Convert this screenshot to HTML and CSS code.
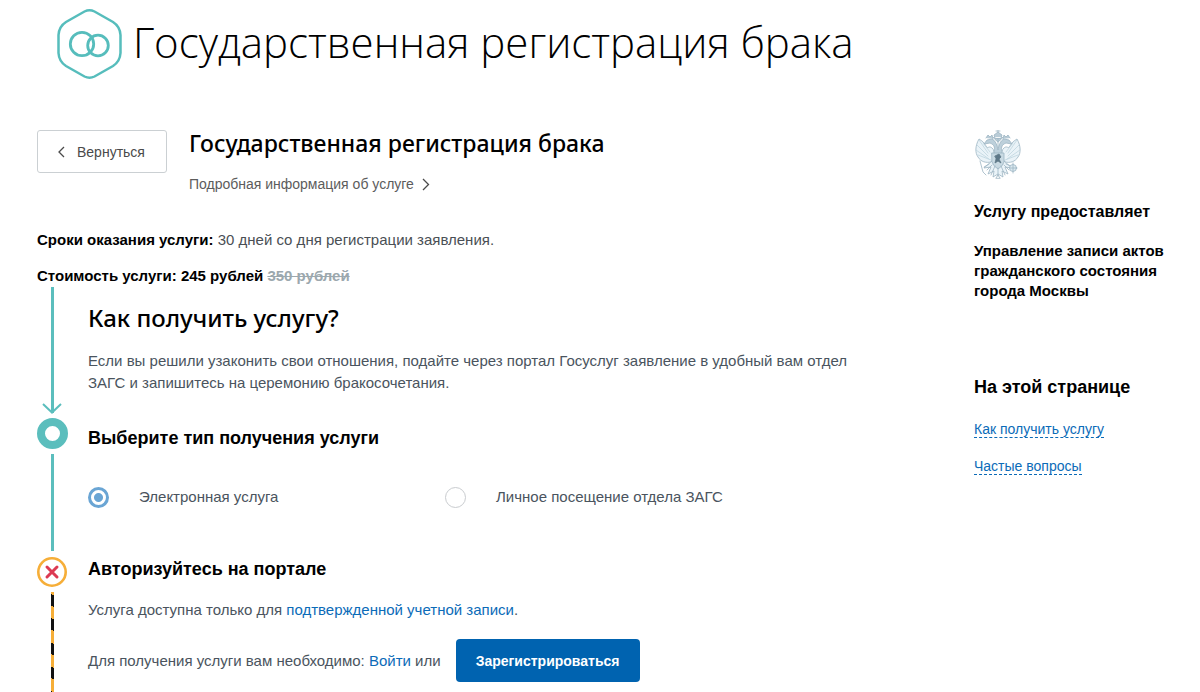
FILE: index.html
```html
<!DOCTYPE html>
<html lang="ru">
<head>
<meta charset="utf-8">
<meta name="viewport" content="width=device-width, initial-scale=1">
<title>Государственная регистрация брака</title>
<link rel="stylesheet" href="styles.css">
</head>
<body>
<div class="page">
  <header class="hero">
    <svg class="hero-icon" width="66" height="72" viewBox="0 0 66 72" fill="none" stroke="#56bdbc" aria-hidden="true">
      <path stroke-width="2.5" d="M27.500 3.500Q32.500 1 37.500 3.500L56 14Q63 18.500 63.500 27V45Q63 53.500 56 58L37.500 68.500Q32.500 71 27.500 68.500L9 58Q2 53.500 1.500 45V27Q2 18.500 9 14Z"/>
      <circle cx="25" cy="36" r="11.700" stroke-width="2.800"/>
      <circle cx="41" cy="37.500" r="10.300" stroke-width="2.800"/>
    </svg>
    <h1 class="hero-title">Государственная регистрация брака</h1>
  </header>
  <div class="columns">
    <main class="content">
      <div class="service-head">
        <button class="back" type="button">
          <svg width="7" height="12" viewBox="0 0 7 12" fill="none" stroke="#4a4a4a" stroke-width="1.300" aria-hidden="true"><path d="M6 1 1 6l5 5"/></svg>
          Вернуться
        </button>
        <div>
          <h2 class="service-title">Государственная регистрация брака</h2>
          <a class="details" href="#details">Подробная информация об услуге
            <svg width="8" height="13" viewBox="0 0 8 13" fill="none" stroke="#4a4a4a" stroke-width="1.300" aria-hidden="true"><path d="m1 1 5.500 5.500L1 12"/></svg>
          </a>
        </div>
      </div>
      <p class="fact"><b>Сроки оказания услуги:</b> 30 дней со дня регистрации заявления.</p>
      <p class="fact"><b>Стоимость услуги: 245 рублей <s class="old-price">350 рублей</s></b></p>

      <section class="step" id="how">
        <div class="rail rail-first">
          <div class="rail-line"></div>
          <svg class="rail-arrow" width="20" height="11" viewBox="0 0 20 11" fill="none" stroke="#5bbebd" stroke-width="2" aria-hidden="true"><path d="m1 1 9 8.500L19 1"/></svg>
        </div>
        <div class="step-body intro">
          <h2 class="how-title">Как получить услугу?</h2>
          <p class="text">Если вы решили узаконить свои отношения, подайте через портал Госуслуг заявление в удобный вам отдел ЗАГС и запишитесь на церемонию бракосочетания.</p>
        </div>
      </section>

      <section class="step">
        <div class="rail rail-middle">
          <div class="ring"></div>
          <div class="rail-line"></div>
        </div>
        <div class="step-body choice">
          <h3 class="step-title" id="type-title">Выберите тип получения услуги</h3>
          <div class="options" role="radiogroup" aria-labelledby="type-title">
            <label class="option"><input class="radio" type="radio" name="type" checked>Электронная услуга</label>
            <label class="option"><input class="radio" type="radio" name="type">Личное посещение отдела ЗАГС</label>
          </div>
        </div>
      </section>

      <section class="step step-last">
        <div class="rail">
          <svg width="30" height="30" viewBox="0 0 30 30" fill="none" aria-hidden="true">
            <circle cx="15" cy="15" r="13.700" stroke="#f6ae38" stroke-width="2.600"/>
            <path d="m10 10 10 10M20 10 10 20" stroke="#dc3a53" stroke-width="3" stroke-linecap="round"/>
          </svg>
          <div class="rail-line rail-warning"></div>
        </div>
        <div class="step-body auth">
          <h3 class="step-title">Авторизуйтесь на портале</h3>
          <p class="text note">Услуга доступна только для <a class="link" href="#account">подтвержденной учетной записи</a>.</p>
          <div class="auth-row">
            <span class="text">Для получения услуги вам необходимо: <a class="link" href="#login">Войти</a> или</span>
            <button class="primary" type="button">Зарегистрироваться</button>
          </div>
        </div>
      </section>
    </main>

    <aside class="sidebar">
      <svg class="emblem" width="48" height="50" viewBox="0 0 48 50" fill="none" stroke="#9db5c3" stroke-width="0.800" stroke-linecap="round" aria-hidden="true">
        <g fill="#eaf3f8">
          <path d="M19 19C15 14 14 20 12 16S8 11 5 9C1 16 1 23 4 27c3 5 8 6 13 5l4-5Z"/>
          <path d="M29 19c4-5 5 1 7-3s4-5 7-7c4 7 4 14 1 18-3 5-8 6-13 5l-4-5Z"/>
          <path d="m18 31-8 7 7-1-3 7 6-3-1 6 5-3 5 3-1-6 6 3-3-7 7 1-8-7Z"/>
        </g>
        <path d="m5 10 9 13M3 15l11 11M2 20l13 9M4 25l13 5M43 10l-9 13M45 15 34 26M46 20l-13 9M44 25l-13 5M9 13l7 9M39 13l-7 9" stroke="#bfd5e0"/>
        <path d="M20 23c1-5 1-8-4-10l-6 1 3-4 5-1c4 2 5 6 6 11 1-5 2-9 6-11l5 1 3 4-6-1c-5 2-5 5-4 10" fill="#bdd0db"/>
        <path d="m12 8 2-3 2 2 2-2 1 4M29 9l1-4 2 2 2-2 2 3M21 8l-1-3 4-3 4 3-1 3ZM24 2V0M22 1h4M24 9v8M19 7c2 2 3 4 5 5 2-1 3-3 5-5" fill="#b9ccd7"/>
        <path d="M18 23h12v9q-1 4-6 7-5-3-6-7Z" fill="#c9dae3"/>
        <path d="m21 26 4-2 2 3-2 2 2 4-3-2-3 2 1-4Z" fill="#5e7888" stroke="#5e7888"/>
        <path d="m15 34-5 3M6 31l3 11 3 3M32 34l5 2M21 36l-4 9M24 38v8M27 36l4 9M18 35l-5 5M30 35l5 5"/>
        <circle cx="39" cy="38" r="3.500" fill="#dce9f0"/>
        <path d="M39 33v10M36 38h7M22 48l2-3 2 3Z"/>
      </svg>
      <h3 class="provider-label">Услугу предоставляет</h3>
      <p class="provider">Управление записи актов гражданского состояния города Москвы</p>
      <nav aria-labelledby="toc-title">
        <h3 class="toc-title" id="toc-title">На этой странице</h3>
        <ul class="toc">
          <li><a class="toc-link" href="#how">Как получить услугу</a></li>
          <li><a class="toc-link" href="#faq">Частые вопросы</a></li>
        </ul>
      </nav>
    </aside>
  </div>
</div>
</body>
</html>
```
FILE: styles.css
```css
* { box-sizing: border-box; }
body {
  margin: 0;
  background: #fff;
  color: #000;
  font-family: "Liberation Sans", Arial, sans-serif;
  font-size: 15px;
  line-height: 22px;
}
h1, h2, h3, p, ul { margin: 0; padding: 0; }
button, input { font: inherit; margin: 0; }
button { cursor: pointer; }

.page { display: flex; flex-direction: column; min-height: 100vh; }
.hero { display: flex; align-items: flex-start; gap: 10px; padding: 8px 24px 0 57px; }
.hero-icon { flex: none; }
.hero-title { padding-top: 6px; font: 300 42px/56px "Open Sans", "Noto Sans", sans-serif; }

.columns {
  flex: 1;
  display: grid;
  grid-template-columns: minmax(0, 1fr) 202px;
  column-gap: 88px;
  padding: 50px 24px 0 37px;
}
.content { display: flex; flex-direction: column; }
.service-head { display: flex; align-items: flex-start; gap: 22px; margin-bottom: 34px; }
.back {
  display: flex;
  align-items: center;
  gap: 12px;
  height: 43px;
  padding: 0 21px 0 20px;
  border: 1px solid #cbd0d3;
  border-radius: 3px;
  background: #fff;
  color: #4a4a4a;
  font-size: 14px;
}
.service-title { font: 500 23px/26px "Noto Sans", sans-serif; }
.details {
  display: flex;
  align-items: center;
  gap: 8px;
  margin-top: 17px;
  color: #5c5c5c;
  font-size: 14px;
  text-decoration: none;
}
.fact { margin-bottom: 14px; color: #4a4f55; }
.fact b { color: #000; }
.fact .old-price { color: #9ca8ae; }
.fact + .step { margin-top: -14px; }

.step { display: grid; grid-template-columns: 30px minmax(0, 1fr); column-gap: 21px; }
.step-last { flex: 1; }
.rail { display: flex; flex-direction: column; align-items: center; }
.rail-first { padding-bottom: 4px; }
.rail-middle { padding-bottom: 6px; }
.rail-line { flex: 1; width: 3px; background: #5bbebd; }
.rail-arrow { margin-top: -10px; }
.ring { width: 31px; height: 31px; border: 8px solid #5bbebd; border-radius: 50%; }
.ring + .rail-line, svg + .rail-line { margin-top: 5px; }
.rail-warning { background: repeating-linear-gradient(210deg, #f6ae38 0 3px, #111 3px 13px, #f6ae38 13px 21px); }

.intro { padding: 15px 0 24px; }
.how-title { margin-bottom: 16px; font: 500 24px/32px "Noto Sans", sans-serif; }
.text { color: #4a545e; }
.choice { padding: 8px 0 49px; }
.step-title { font-size: 18px; line-height: 24px; }
.options { display: grid; grid-template-columns: 357px 1fr; margin-top: 36px; }
.option { display: flex; align-items: center; gap: 30px; color: #4a545e; }
.radio {
  appearance: none;
  width: 21px;
  height: 21px;
  border: 1px solid #c9cccf;
  border-radius: 50%;
  background: #fff;
}
.radio:checked { border: 3px solid #6aa5d4; background: radial-gradient(circle, #6aa5d4 4px, #fff 5px); }

.auth { padding-bottom: 9px; }
.note { margin-top: 18px; }
.link { color: #0b6bb8; text-decoration: none; }
.auth-row { display: flex; align-items: center; gap: 15px; margin-top: 18px; }
.primary {
  height: 43px;
  padding: 0 20px;
  border: 0;
  border-radius: 4px;
  background: #0063b0;
  color: #fff;
  font-size: 14px;
  font-weight: 700;
}

.emblem { display: block; }
.provider-label { margin-top: 22px; font-size: 16px; line-height: 20px; }
.provider { margin-top: 19px; font-weight: 700; line-height: 20px; }
.toc-title { margin-top: 74px; font-size: 18px; line-height: 24px; }
.toc { display: grid; gap: 15px; margin-top: 19px; list-style: none; }
.toc-link { color: #0b6bb8; font-size: 14px; text-decoration: none; border-bottom: 1px dashed #0b6bb8; }
```
